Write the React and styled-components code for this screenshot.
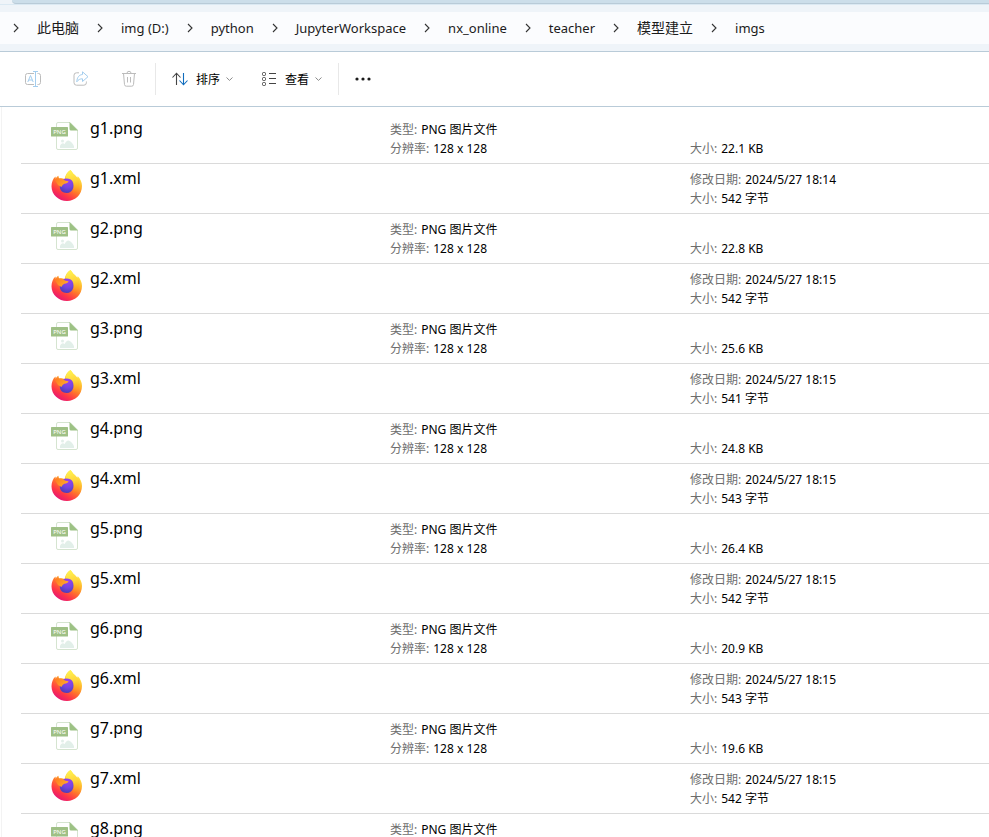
import React from 'react';
import styled, { createGlobalStyle } from 'styled-components';

const Colours = {
  frame: '#eff4f9',
  tabStrip: '#ccdeea',
  line: '#b9cbd8',
  rowLine: '#dadada',
  text: '#1b1b1b',
  label: '#6d6d6d',
  disabled: '#bcbcbc',
  disabledBlue: '#a3cdee',
  blue: '#0f6cbd',
};

const GlobalStyle = createGlobalStyle`
  * {
    box-sizing: border-box;
  }
  body {
    margin: 0;
    background: #fff;
    color: ${Colours.text};
    font-family: 'Noto Sans', 'Noto Sans CJK SC', sans-serif;
    font-size: 12px;
  }
`;

const crumbs = [
  { name: '此电脑', cjk: true },
  { name: 'img (D:)' },
  { name: 'python' },
  { name: 'JupyterWorkspace' },
  { name: 'nx_online' },
  { name: 'teacher' },
  { name: '模型建立', cjk: true },
  { name: 'imgs' },
];

const png = (name, size) => ({ name, kind: 'png', size });
const xml = (name, date, size) => ({ name, kind: 'xml', date, size });

const files = [
  png('g1.png', '22.1 KB'),
  xml('g1.xml', '2024/5/27 18:14', '542 字节'),
  png('g2.png', '22.8 KB'),
  xml('g2.xml', '2024/5/27 18:15', '542 字节'),
  png('g3.png', '25.6 KB'),
  xml('g3.xml', '2024/5/27 18:15', '541 字节'),
  png('g4.png', '24.8 KB'),
  xml('g4.xml', '2024/5/27 18:15', '543 字节'),
  png('g5.png', '26.4 KB'),
  xml('g5.xml', '2024/5/27 18:15', '542 字节'),
  png('g6.png', '20.9 KB'),
  xml('g6.xml', '2024/5/27 18:15', '543 字节'),
  png('g7.png', '19.6 KB'),
  xml('g7.xml', '2024/5/27 18:15', '542 字节'),
  png('g8.png', ''),
];

const Window = styled.div`
  display: flex;
  flex-direction: column;
  height: 100vh;
  overflow: hidden;
`;

const Header = styled.header`
  background: ${Colours.frame};
  border-bottom: 1px solid ${Colours.line};
`;

const TabStrip = styled.div`
  border-bottom: 1px solid #dbe9f3;
  padding-left: 12px;
`;

const TabStripFill = styled.div`
  height: 4px;
  background: ${Colours.tabStrip};
  border-bottom: 1px solid ${Colours.line};
  border-bottom-left-radius: 4px;
`;

const AddressBar = styled.nav`
  display: flex;
  align-items: center;
  gap: 18px;
  height: 32px;
  margin: 7px 0;
  padding-left: 13px;
  background: #fbfcfe;
`;

const Crumb = styled.a`
  color: ${Colours.text};
  font-size: ${({ $cjk }) => ($cjk ? 14 : 13)}px;
  line-height: 20px;
  text-decoration: none;
  white-space: nowrap;
`;

const Toolbar = styled.div`
  display: flex;
  align-items: center;
  gap: 16px;
  height: 55px;
  flex-shrink: 0;
  padding-left: 23px;
  border-bottom: 1px solid ${Colours.line};
`;

const ToolGroup = styled.div`
  display: flex;
  align-items: center;
  gap: 28px;
`;

const ToolButton = styled.button`
  display: flex;
  align-items: center;
  gap: ${({ $gap }) => $gap || 0}px;
  height: 32px;
  padding: 0;
  border: 0;
  background: none;
  color: ${Colours.text};
  font: inherit;
`;

const ToolLabel = styled.span`
  margin-right: -2px;
  color: #000;
`;

const Divider = styled.div`
  width: 1px;
  height: 32px;
  background: #e8e8e8;
`;

const FileList = styled.ul`
  flex: 1;
  min-height: 0;
  overflow: hidden;
  margin: 0 0 0 1px;
  padding: 7px 0 0 19px;
  border-left: 1px solid #f3f3f3;
  list-style: none;
`;

const FileRow = styled.li`
  display: grid;
  grid-template-columns: 32px 300px 300px 1fr;
  height: 50px;
  padding: 6px 0 0 30px;
  border-bottom: 1px solid ${Colours.rowLine};
`;

const FileName = styled.span`
  padding-left: 7px;
  color: #000;
  font-size: 16px;
  line-height: 16px;
`;

const Details = styled.dl`
  display: flex;
  flex-direction: column;
  justify-content: flex-end;
  height: 38px;
  margin: 0;
  padding-left: 7px;
`;

const Detail = styled.div`
  display: flex;
  gap: 4px;
  line-height: 19px;
  white-space: nowrap;
`;

const Label = styled.dt`
  color: ${Colours.label};
`;

const Value = styled.dd`
  margin: 0;
  color: #000;
`;

const CrumbArrow = () => (
  <svg width="6" height="10" viewBox="0 0 6 10" fill="none" stroke="#333" strokeWidth="1.1" aria-hidden="true">
    <path d="M1 1 5 5 1 9" />
  </svg>
);

const DownArrow = () => (
  <svg width="7" height="4" viewBox="0 0 7 4" fill="none" stroke="#8a8a8a" aria-hidden="true">
    <path d="M.5.5 3.5 3.4 6.5.5" />
  </svg>
);

const RenameIcon = () => (
  <svg width="20" height="20" viewBox="0 0 20 20" fill="none" stroke={Colours.disabled} aria-hidden="true">
    <path d="M11 4.5H4.5a2 2 0 0 0-2 2v7a2 2 0 0 0 2 2H11M14.5 4.5h1a2 2 0 0 1 2 2v7a2 2 0 0 1-2 2h-1" />
    <path d="M4.8 13 7.5 6.5 10.2 13M5.8 11h3.4M12.5 2.5v15M10 2.5h5M10 17.5h5" stroke={Colours.disabledBlue} />
  </svg>
);

const ShareIcon = () => (
  <svg width="20" height="20" viewBox="0 0 20 20" fill="none" stroke={Colours.disabled} aria-hidden="true">
    <path d="M8 3.8H5.5A2.5 2.5 0 0 0 3 6.3v7.4a2.5 2.5 0 0 0 2.5 2.5h7.4a2.5 2.5 0 0 0 2.5-2.5v-1.2" />
    <path
      d="M11.5 2.8 17 7.7l-5.5 4.8V9.8c-2.5 0-4.2.8-5.7 3 .2-4.3 2.2-7 5.700-7.300Z"
      stroke={Colours.disabledBlue}
      strokeLinejoin="round"
    />
  </svg>
);

const DeleteIcon = () => (
  <svg width="20" height="20" viewBox="0 0 20 20" fill="none" stroke={Colours.disabled} aria-hidden="true">
    <path d="M3 4.5h14M8 4.3a2 2 0 0 1 4 0M4.5 4.5l1 11a1.8 1.8 0 0 0 1.800 1.700h5.400a1.800 1.800 0 0 0 1.800-1.700l1-11M8.5 8v5.500M11.5 8v5.500" />
  </svg>
);

const SortIcon = () => (
  <svg width="16" height="14" viewBox="0 0 16 14" fill="none" stroke="#444" strokeWidth="1.1" aria-hidden="true">
    <path d="M4.5 13V1.5M.5 5.5l4-4.300 4 4.300" />
    <path d="M11.5 1v11.500M7.5 8.500l4 4.300 4-4.300" stroke={Colours.blue} />
  </svg>
);

const ViewIcon = () => (
  <svg width="16" height="15" viewBox="0 0 16 15" fill="none" stroke="#444" aria-hidden="true">
    <rect x="1.5" y=".5" width="3" height="3" rx="1" />
    <rect x="1.5" y="5.5" width="3" height="3" rx="1" />
    <rect x="1.5" y="10.5" width="3" height="3" rx="1" />
    <path d="M8 1.5h7M8 6.5h7M8 11.5h7" />
  </svg>
);

const MoreIcon = () => (
  <svg width="16" height="4" viewBox="0 0 16 4" fill="#1b1b1b" aria-hidden="true">
    <circle cx="2" cy="2" r="1.6" />
    <circle cx="8" cy="2" r="1.6" />
    <circle cx="14" cy="2" r="1.6" />
  </svg>
);

const PngIcon = () => (
  <svg width="32" height="32" viewBox="0 0 32 32" aria-hidden="true">
    <path d="M7 2.5h12l7.500 7.500v18a1.500 1.500 0 0 1-1.500 1.500H7A1.500 1.500 0 0 1 5.500 28V4A1.500 1.500 0 0 1 7 2.500Z" fill="#fff" stroke="#d5e4d0" />
    <path d="M18.5 2 27 10.500h-7A1.500 1.500 0 0 1 18.500 9Z" fill="#9cc184" />
    <circle cx="11.5" cy="21" r="1.5" fill="#e2efe9" />
    <path d="M9 28v-1.500c0-2 3-4.500 4.500-2.300 1-2 2.500-3.700 4-3.700s5.500 4 5.500 6V28Z" fill="#e2efe9" />
    <rect y="7" width="17" height="9.500" rx=".5" fill="#9fc086" />
    <text x="8.5" y="14" fill="#fff" fontFamily="Noto Sans, sans-serif" fontSize="6" textAnchor="middle">PNG</text>
  </svg>
);

const FirefoxIcon = () => (
  <svg width="32" height="32" viewBox="0 0 32 32" aria-hidden="true">
    <use href="#firefox" />
  </svg>
);

// Shared by every .xml row
const FirefoxShape = () => (
  <svg width="0" height="0" aria-hidden="true">
    <defs>
      <linearGradient id="ffBody" x1=".85" y1=".1" x2=".3" y2="1">
        <stop offset="0" stopColor="#fff44f" />
        <stop offset=".3" stopColor="#ffb92e" />
        <stop offset=".52" stopColor="#ff7a2a" />
        <stop offset=".78" stopColor="#ff3647" />
        <stop offset="1" stopColor="#e31577" />
      </linearGradient>
      <linearGradient id="ffFlame" x1=".4" y1="0" x2=".6" y2="1">
        <stop offset="0" stopColor="#fff44f" />
        <stop offset=".5" stopColor="#ffd23a" />
        <stop offset="1" stopColor="#ff980e" stopOpacity="0" />
      </linearGradient>
      <radialGradient id="ffGlobe" cx=".6" cy=".2" r=".85">
        <stop offset="0" stopColor="#a13cf0" />
        <stop offset=".5" stopColor="#7446e0" />
        <stop offset="1" stopColor="#4a3bb4" />
      </radialGradient>
      <linearGradient id="ffHead" x1="0" y1="0" x2="1" y2=".6">
        <stop offset="0" stopColor="#ff7a20" />
        <stop offset="1" stopColor="#ffab2a" />
      </linearGradient>
      <g id="firefox">
        <path
          d="M19.5 0c1.500 1.500 2.200 3.300 4 4.800 1 .9 2 1.800 2.700 3l.6-1.600c2.600 2.500 4.200 6 4.200 9.800C31 24.500 24.300 31 16 31S.5 24.700.5 16.200C.5 12.600 2 8.500 4.500 6.500l.3 2.200C5.500 7 6.500 6.300 7.300 5.800l.8 2.700c2-.7 3.800-.3 5.500.5C14.500 5 16.500 1.500 19.500 0Z"
          fill="url(#ffBody)"
        />
        <path d="M19.5 0c1.500 1.500 2.200 3.300 4 4.800 3.500 3 5.500 7 4.500 12.200-1 4.500-4 6.500-6.500 7 2-4 1.500-9-1.500-12-2-2-5-2.500-5.700-4C15 4.500 16.800 1.800 19.500 0Z" fill="url(#ffFlame)" />
        <path d="M12 9.500c3-1.800 8-1 9.700 2.200 2 4.500.3 11-5.900 11.300-4.300 0-7-2.800-7-6.500Z" fill="url(#ffGlobe)" />
        <path d="M4 9.800c2-1.800 5.500-1.800 8.500-.5 1.200 1.400 3 1.900 5 2-.2 1.800-2.200 2.200-4 2.500-1.200.6-2.500 1.700-3 3.200L7 15Z" fill="url(#ffHead)" />
      </g>
    </defs>
  </svg>
);

const FirefoxDefs = styled.div`
  height: 0;
  overflow: hidden;
`;

const Field = ({ label, value }) => (
  <Detail>
    <Label>{label}:</Label>
    <Value>{value}</Value>
  </Detail>
);

const FileItem = ({ file }) => (
  <FileRow>
    {file.kind === 'png' ? <PngIcon /> : <FirefoxIcon />}
    <FileName>{file.name}</FileName>
    <Details>
      {file.kind === 'png' && (
        <>
          <Field label="类型" value="PNG 图片文件" />
          <Field label="分辨率" value="128 x 128" />
        </>
      )}
    </Details>
    <Details>
      {file.date && <Field label="修改日期" value={file.date} />}
      {file.size && <Field label="大小" value={file.size} />}
    </Details>
  </FileRow>
);

export default function App() {
  return (
    <Window>
      <GlobalStyle />
      <FirefoxDefs><FirefoxShape /></FirefoxDefs>
      <Header>
        <TabStrip>
          <TabStripFill />
        </TabStrip>
        <AddressBar aria-label="Path">
          {crumbs.map(({ name, cjk }) => (
            <React.Fragment key={name}>
              <CrumbArrow />
              <Crumb href="#" $cjk={cjk}>{name}</Crumb>
            </React.Fragment>
          ))}
        </AddressBar>
      </Header>
      <Toolbar>
        <ToolGroup>
          <ToolButton disabled aria-label="Rename"><RenameIcon /></ToolButton>
          <ToolButton disabled aria-label="Share"><ShareIcon /></ToolButton>
          <ToolButton disabled aria-label="Delete"><DeleteIcon /></ToolButton>
        </ToolGroup>
        <Divider />
        <ToolGroup>
          <ToolButton $gap={8}>
            <SortIcon />
            <ToolLabel>排序</ToolLabel>
            <DownArrow />
          </ToolButton>
          <ToolButton $gap={8}>
            <ViewIcon />
            <ToolLabel>查看</ToolLabel>
            <DownArrow />
          </ToolButton>
        </ToolGroup>
        <Divider />
        <ToolButton aria-label="More"><MoreIcon /></ToolButton>
      </Toolbar>
      <FileList>
        {files.map((file) => (
          <FileItem key={file.name} file={file} />
        ))}
      </FileList>
    </Window>
  );
}
